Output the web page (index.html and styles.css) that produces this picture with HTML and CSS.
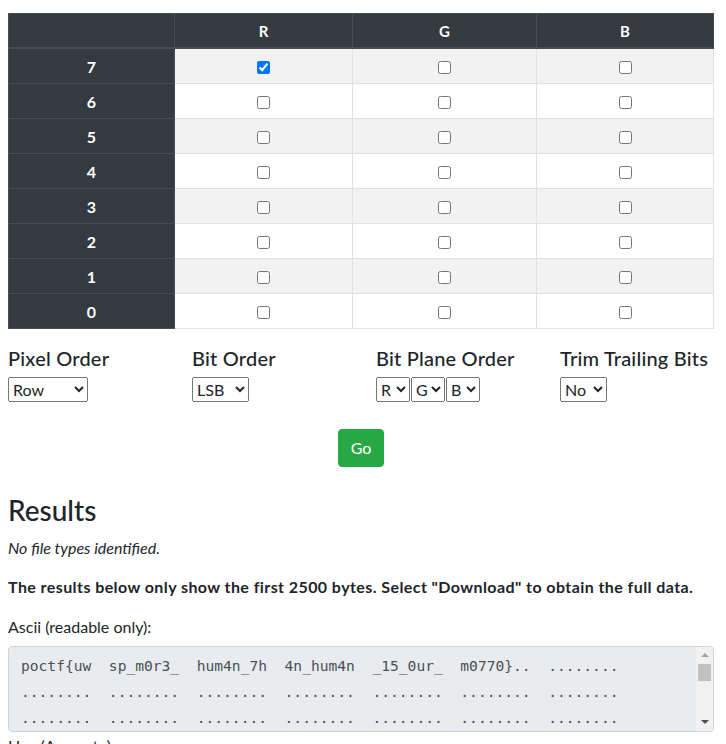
FILE: index.html
```html
<!DOCTYPE html>
<html lang="en">
<head>
<meta charset="utf-8">
<title>Bit plane extraction</title>
<link rel="stylesheet" href="styles.css">
</head>
<body>
<div class="page">
  <table class="bits">
    <colgroup>
      <col class="c-label"><col class="c-r"><col class="c-g"><col class="c-b">
    </colgroup>
    <thead>
      <tr><th></th><th>R</th><th>G</th><th>B</th></tr>
    </thead>
    <tbody>
      <tr><th>7</th><td><input type="checkbox" checked></td><td><input type="checkbox"></td><td><input type="checkbox"></td></tr>
      <tr><th>6</th><td><input type="checkbox"></td><td><input type="checkbox"></td><td><input type="checkbox"></td></tr>
      <tr><th>5</th><td><input type="checkbox"></td><td><input type="checkbox"></td><td><input type="checkbox"></td></tr>
      <tr><th>4</th><td><input type="checkbox"></td><td><input type="checkbox"></td><td><input type="checkbox"></td></tr>
      <tr><th>3</th><td><input type="checkbox"></td><td><input type="checkbox"></td><td><input type="checkbox"></td></tr>
      <tr><th>2</th><td><input type="checkbox"></td><td><input type="checkbox"></td><td><input type="checkbox"></td></tr>
      <tr><th>1</th><td><input type="checkbox"></td><td><input type="checkbox"></td><td><input type="checkbox"></td></tr>
      <tr><th>0</th><td><input type="checkbox"></td><td><input type="checkbox"></td><td><input type="checkbox"></td></tr>
    </tbody>
  </table>

  <div class="opts">
    <div class="opt">
      <h5 class="opt-label">Pixel Order</h5>
      <select class="sel sel-row"><option>Row</option><option>Column</option></select>
    </div>
    <div class="opt">
      <h5 class="opt-label">Bit Order</h5>
      <select class="sel sel-lsb"><option>LSB</option><option>MSB</option></select>
    </div>
    <div class="opt">
      <h5 class="opt-label">Bit Plane Order</h5>
      <div class="sel-group">
        <select class="sel sel-ch"><option>R</option><option>G</option><option>B</option></select>
        <select class="sel sel-ch"><option>G</option><option>R</option><option>B</option></select>
        <select class="sel sel-ch"><option>B</option><option>R</option><option>G</option></select>
      </div>
    </div>
    <div class="opt">
      <h5 class="opt-label">Trim Trailing Bits</h5>
      <select class="sel sel-no"><option>No</option><option>Yes</option></select>
    </div>
  </div>

  <div class="actions">
    <button class="btn-go" type="button">Go</button>
  </div>

  <h3 class="results-title">Results</h3>
  <p class="note"><em>No file types identified.</em></p>
  <p class="warn">The results below only show the first 2500 bytes. Select "Download" to obtain the full data.</p>
  <p class="field-label">Ascii (readable only):</p>
  <div class="output-wrap">
    <textarea class="output" readonly wrap="off">poctf{uw  sp_m0r3_  hum4n_7h  4n_hum4n  _15_0ur_  m0770}..  ........
........  ........  ........  ........  ........  ........  ........
........  ........  ........  ........  ........  ........  ........
........  ........  ........  ........  ........  ........  ........
........  ........  ........  ........  ........  ........  ........
........  ........  ........  ........  ........  ........  ........
........  ........  ........  ........  ........  ........  ........
........  ........  ........  ........  ........  ........  ........
........  ........  ........  ........  ........  ........  ........</textarea>
    <div class="vscroll" aria-hidden="true">
      <span class="vs-btn vs-up"></span>
      <span class="vs-thumb"></span>
      <span class="vs-track"></span>
      <span class="vs-btn vs-down"></span>
    </div>
  </div>
  <p class="field-label">Hex (Accurate):</p>
</div>
</body>
</html>
```

FILE: styles.css
```css
body {
  margin: 8px;
  font-family: Lato, "Liberation Sans", sans-serif;
  font-size: 16px;
  line-height: 1.5;
  color: #212529;
  background: #fff;
}

.page {
  width: 706px;
  padding-top: 5px;
}

.bits {
  width: 705px;
  table-layout: fixed;
  border-collapse: collapse;
  margin-bottom: 17px;
}

.c-label { width: 166px; }
.c-r { width: 178px; }
.c-g { width: 184px; }
.c-b { width: 177px; }

.bits th,
.bits td {
  border: 1px solid #dee2e6;
  padding: 5px;
  line-height: 24px;
  text-align: center;
  vertical-align: middle;
}

.bits th {
  background: #343a40;
  color: #fff;
  border-color: #454d55;
  font-weight: 700;
}

.bits tbody th {
  padding-top: 6px;
  padding-bottom: 4px;
}

.bits thead th {
  padding-top: 5px;
  padding-bottom: 4px;
  border-bottom-width: 2px;
  font-size: 15px;
}

.bits tbody tr:nth-child(odd) td {
  background: #f2f2f2;
}

.bits input[type="checkbox"] {
  margin: 0;
  width: 13px;
  height: 13px;
  vertical-align: middle;
}

.opts {
  display: grid;
  grid-template-columns: repeat(4, 184px);
}

.opt-label {
  margin: 0 0 7px;
  font-size: 20px;
  font-weight: 500;
  line-height: 24px;
  white-space: nowrap;
  letter-spacing: 0.2px;
}

.sel {
  font-family: inherit;
  font-size: 16px;
  height: 25px;
  margin: 0;
  color: #212529;
}

.sel-row { width: 80px; }
.sel-lsb { width: 57px; }
.sel-ch { width: 34px; }
.sel-no { width: 47px; }

.sel-group {
  display: flex;
  gap: 1px;
}

.actions {
  display: flex;
  justify-content: center;
  margin-top: 27px;
}

.btn-go {
  font-family: inherit;
  font-size: 16px;
  line-height: 24px;
  padding: 6px 12px;
  color: #fff;
  background: #28a745;
  border: 1px solid #28a745;
  border-radius: 4px;
}

.results-title {
  margin: 27px 0 8px;
  font-size: 28px;
  font-weight: 500;
  line-height: 1.2;
}

.note {
  margin: 0 0 15px;
}

.warn {
  margin: 0 0 16px;
  font-weight: 700;
  letter-spacing: 0.42px;
}

.field-label {
  margin: 0 0 7px;
}

.output-wrap {
  position: relative;
  width: 706px;
  margin: 0 0 2px;
}

.output {
  display: block;
  box-sizing: border-box;
  width: 706px;
  height: 86px;
  margin: 0;
  padding: 6px 30px 6px 12px;
  font-family: "DejaVu Sans Mono", "Liberation Mono", monospace;
  font-size: 14.6px;
  line-height: 26px;
  color: #495057;
  background: #e9ecef;
  border: 1px solid #ced4da;
  border-radius: 4px;
  resize: none;
  white-space: pre;
  overflow: hidden;
  scrollbar-width: none;
}

.vscroll {
  position: absolute;
  top: 1px;
  right: 1px;
  bottom: 1px;
  width: 17px;
  display: flex;
  flex-direction: column;
  background: #f1f1f1;
  border-radius: 0 3px 3px 0;
}

.vs-btn {
  height: 17px;
  flex: none;
  display: flex;
  align-items: center;
  justify-content: center;
}

.vs-btn::after {
  content: "";
  width: 0;
  height: 0;
  border-left: 4px solid transparent;
  border-right: 4px solid transparent;
}

.vs-up::after {
  border-bottom: 4px solid #a3a3a3;
}

.vs-down::after {
  border-top: 4px solid #505050;
}

.vs-thumb {
  height: 17px;
  flex: none;
  margin: 0 2px;
  background: #c1c1c1;
}

.vs-track {
  flex: 1;
}
```
